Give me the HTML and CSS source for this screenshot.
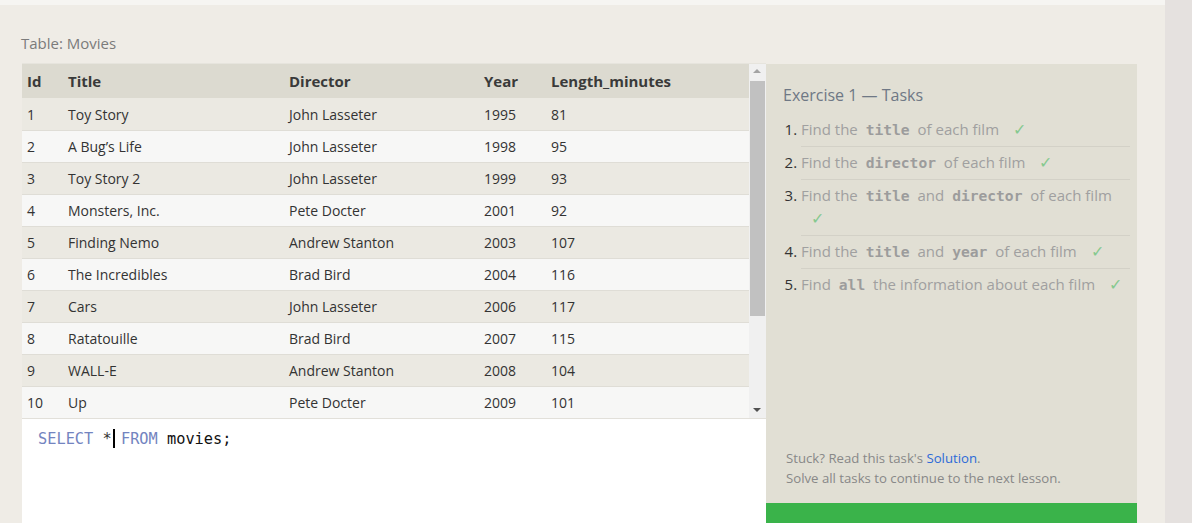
FILE: index.html
```html
<!DOCTYPE html>
<html>
<head>
<meta charset="utf-8">
<link rel="stylesheet" href="styles.css">
</head>
<body>
<div class="page">
  <div class="topstrip"></div>
  <div class="content">
    <div class="label">Table: Movies</div>
    <div class="workspace">
      <div class="left">
        <div class="viewport">
          <table class="grid">
            <colgroup>
              <col class="c-id"><col class="c-title"><col class="c-dir"><col class="c-year"><col class="c-len">
            </colgroup>
            <thead>
              <tr><th>Id</th><th>Title</th><th>Director</th><th>Year</th><th>Length_minutes</th></tr>
            </thead>
            <tbody>
              <tr><td>1</td><td>Toy Story</td><td>John Lasseter</td><td>1995</td><td>81</td></tr>
              <tr><td>2</td><td>A Bug’s Life</td><td>John Lasseter</td><td>1998</td><td>95</td></tr>
              <tr><td>3</td><td>Toy Story 2</td><td>John Lasseter</td><td>1999</td><td>93</td></tr>
              <tr><td>4</td><td>Monsters, Inc.</td><td>Pete Docter</td><td>2001</td><td>92</td></tr>
              <tr><td>5</td><td>Finding Nemo</td><td>Andrew Stanton</td><td>2003</td><td>107</td></tr>
              <tr><td>6</td><td>The Incredibles</td><td>Brad Bird</td><td>2004</td><td>116</td></tr>
              <tr><td>7</td><td>Cars</td><td>John Lasseter</td><td>2006</td><td>117</td></tr>
              <tr><td>8</td><td>Ratatouille</td><td>Brad Bird</td><td>2007</td><td>115</td></tr>
              <tr><td>9</td><td>WALL-E</td><td>Andrew Stanton</td><td>2008</td><td>104</td></tr>
              <tr><td>10</td><td>Up</td><td>Pete Docter</td><td>2009</td><td>101</td></tr>
            </tbody>
          </table>
          <div class="scrollbar">
            <div class="arrow up"></div>
            <div class="thumb"></div>
            <div class="track"></div>
            <div class="arrow down"></div>
          </div>
        </div>
        <div class="editor">
          <span class="kw">SELECT</span> <span class="op">*</span><span class="cursor"></span> <span class="kw">FROM</span> <span class="ident">movies;</span>
        </div>
      </div>
      <div class="right">
        <div class="tasks">
          <h2 class="tasks-title">Exercise 1 — Tasks</h2>
          <ol class="task-list">
            <li>Find the <code>title</code> of each film <span class="check">✓</span></li>
            <li>Find the <code>director</code> of each film <span class="check">✓</span></li>
            <li>Find the <code>title</code> and <code>director</code> of each film <span class="check">✓</span></li>
            <li>Find the <code>title</code> and <code>year</code> of each film <span class="check">✓</span></li>
            <li>Find <code>all</code> the information about each film <span class="check">✓</span></li>
          </ol>
          <div class="help">
            <p>Stuck? Read this task's <a class="link">Solution</a>.</p>
            <p>Solve all tasks to continue to the next lesson.</p>
          </div>
        </div>
        <div class="continue"></div>
      </div>
    </div>
  </div>
</div>
</body>
</html>
```

FILE: styles.css
```css
html, body {
  margin: 0;
  padding: 0;
  height: 100%;
  overflow: hidden;
}
body {
  background: #e5e1df;
  font-family: "Open Sans", "Liberation Sans", sans-serif;
  color: #333;
}
.page {
  width: 1165px;
  height: 100%;
  background: #efece6;
  display: flex;
  flex-direction: column;
}
.topstrip {
  height: 5px;
  background: #f6f5f2;
  flex: none;
}
.content {
  padding: 26px 0 0 22px;
  flex: 1;
}
.label {
  font-size: 15px;
  line-height: 24px;
  color: #7b7b7b;
  margin: 0 0 9px -1px;
}
.workspace {
  display: flex;
  align-items: stretch;
  height: 460px;
}
.left {
  width: 744px;
  display: flex;
  flex-direction: column;
}
.viewport {
  display: flex;
  height: 354px;
  border-top: 1px solid #e6e4dd;
  margin-top: -1px;
}
.grid {
  width: 727px;
  border-collapse: collapse;
  table-layout: fixed;
  font-size: 14px;
  align-self: flex-start;
}
.c-id { width: 41px; }
.c-title { width: 221px; }
.c-dir { width: 195px; }
.c-year { width: 67px; }
.c-len { width: 203px; }
.grid th {
  background: #dcdad0;
  height: 34px;
  padding: 0 0 0 5px;
  text-align: left;
  font-weight: 700;
  font-size: 15px;
  color: #3a3a3a;
}
.grid td {
  height: 31px;
  padding: 0 0 0 5px;
  border-top: 1px solid #dfddd6;
  color: #333;
  white-space: nowrap;
}
.grid tbody tr:nth-child(odd) td { background: #ebe9e2; }
.grid tbody tr:nth-child(even) td { background: #f7f7f6; }
.grid tbody tr:first-child td { border-top: none; height: 32px; }
.scrollbar {
  width: 17px;
  background: #f0f0f0;
  display: flex;
  flex-direction: column;
  align-items: center;
}
.arrow {
  height: 17px;
  width: 17px;
  position: relative;
  flex: none;
}
.arrow::after {
  content: "";
  position: absolute;
  left: 4px;
  width: 0;
  height: 0;
  border-left: 4px solid transparent;
  border-right: 4px solid transparent;
}
.arrow.up::after { top: 5px; border-bottom: 4px solid #a3a3a3; }
.arrow.down::after { top: 7px; border-top: 4px solid #505050; }
.thumb {
  width: 15px;
  height: 235px;
  background: #c1c1c1;
  flex: none;
}
.track { flex: 1; }
.editor {
  flex: 1;
  background: #fff;
  border-top: 1px solid #e2e0da;
  padding: 9px 0 0 16px;
  font-family: "DejaVu Sans Mono", "Liberation Mono", monospace;
  font-size: 15.3px;
  line-height: 22px;
  color: #111;
}
.kw { color: #7384c0; }
.op { color: #333; }
.cursor {
  display: inline-block;
  width: 2px;
  height: 19px;
  background: #000;
  vertical-align: -4px;
  margin-left: 1px;
  margin-right: -3px;
}
.ident { color: #111; }
.right {
  width: 371px;
  display: flex;
  flex-direction: column;
}
.tasks {
  height: 439px;
  background: #e1dfd4;
  padding: 20px 7px 0 17px;
  box-sizing: border-box;
  display: flex;
  flex-direction: column;
}
.tasks-title {
  margin: 0 0 8px 0;
  font-size: 16px;
  font-weight: 400;
  line-height: 22px;
  color: #6f7885;
}
.task-list {
  margin: 0;
  padding: 0 0 0 18px;
  font-size: 15px;
  color: #a0a0a0;
}
.task-list li {
  padding: 4px 0 5px 0;
  line-height: 23px;
  border-bottom: 1px solid #d3d1c7;
}
.task-list li:last-child { border-bottom: none; }
.task-list li::marker { color: #333; }
.task-list code {
  font-family: "DejaVu Sans Mono", "Liberation Mono", monospace;
  font-weight: 700;
  font-size: 14.6px;
  line-height: 1;
  color: #9c9c9c;
  padding: 0 4px;
}
.check {
  color: #86c98f;
  margin-left: 10px;
  font-size: 16px;
  line-height: 1;
}
.help {
  margin-top: auto;
  padding: 0 0 15px 3px;
  font-size: 13.2px;
  line-height: 20px;
  color: #888;
}
.help p { margin: 0; }
.link { color: #2c6ad8; }
.continue {
  flex: 1;
  background: #3ab34a;
}
```
